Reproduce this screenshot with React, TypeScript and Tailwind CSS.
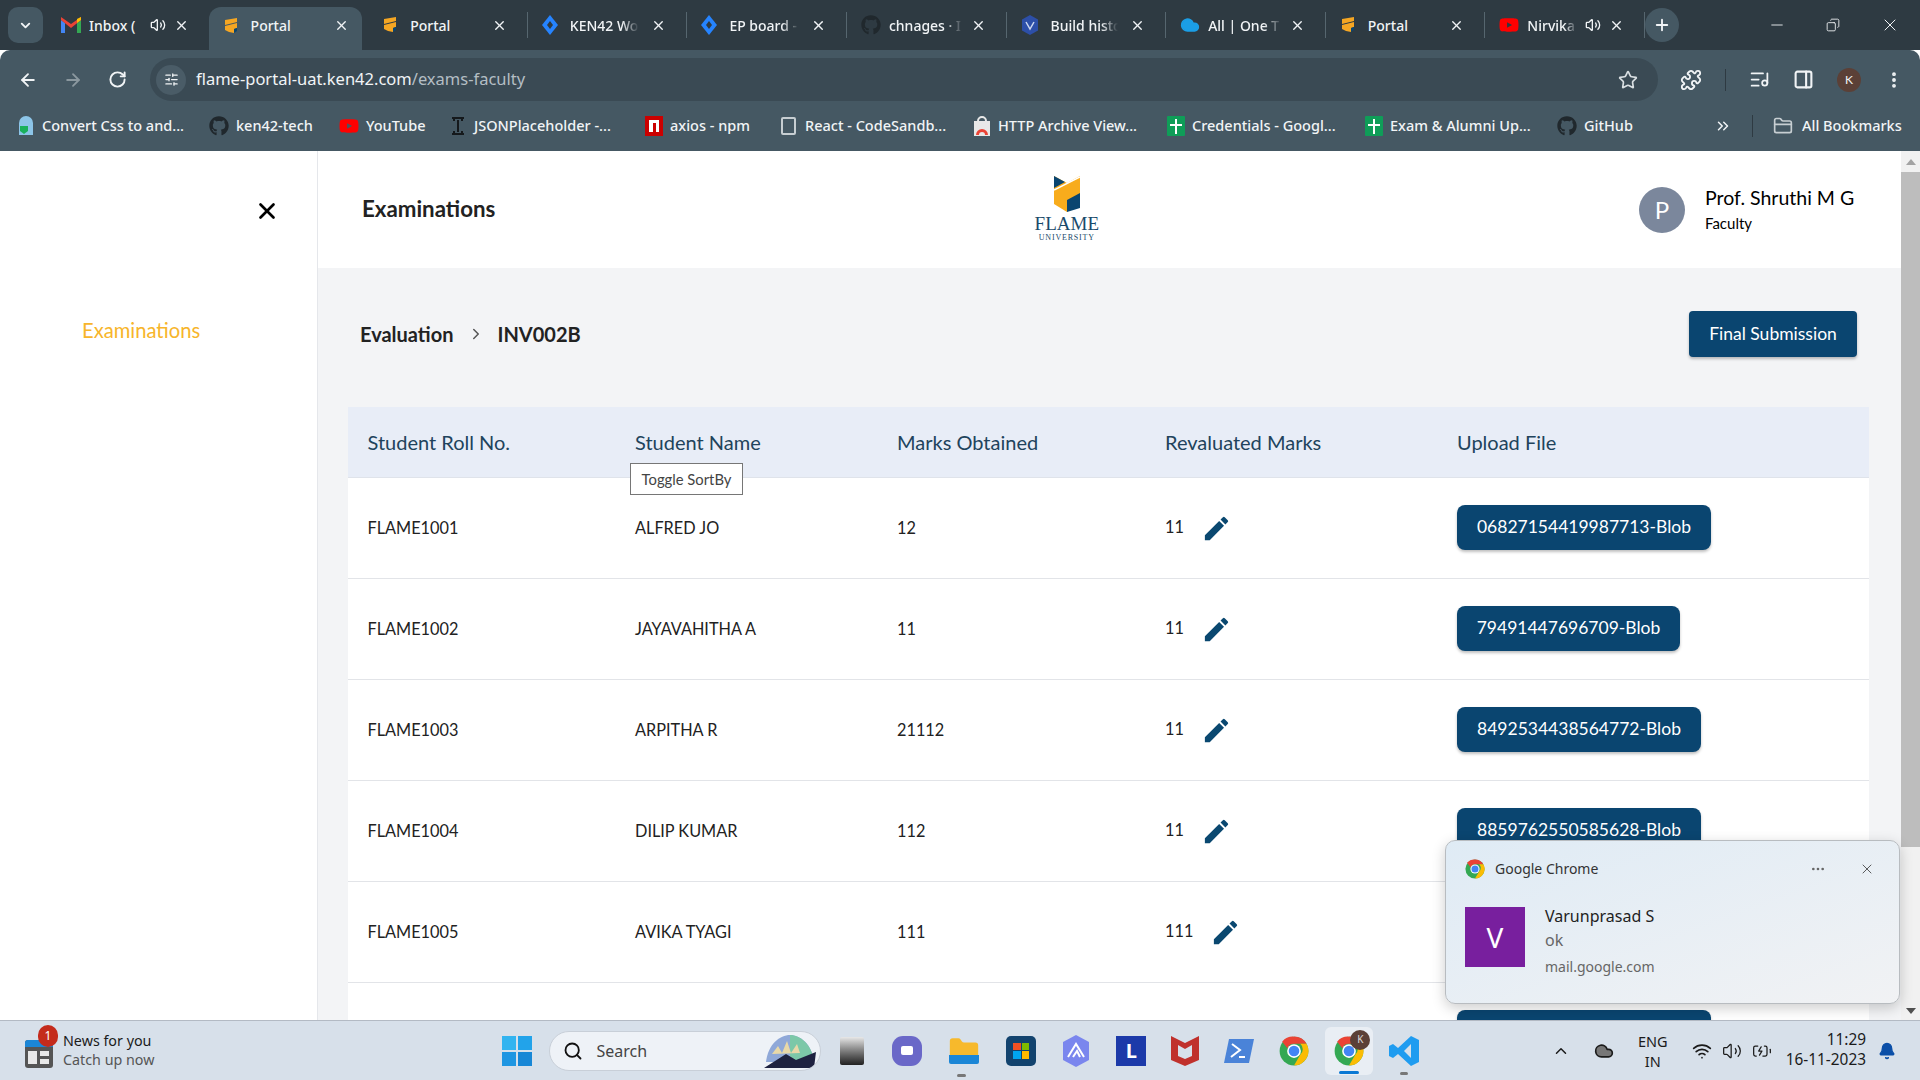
import React from 'react';
import { ArrowLeft, ArrowRight, ChevronDown, ChevronRight, ChevronUp, Copy, Ellipsis, FolderClosed, Minus, PanelRight, Plus, Puzzle, RotateCw, Search, SlidersHorizontal, Star, Volume2, Wifi, X, BatteryCharging, Cloud, Bell, ListMusic, EllipsisVertical, ChevronsRight } from 'lucide-react';
import { FaGithub, FaYoutube } from 'react-icons/fa';

const FlameMark = ({ size = 16 }: { size?: number }) => (
    <svg width={size} height={size} viewBox="0 0 16 16" className="shrink-0">
        <path d="M2 2l12-2v4L2 7z M2 8l12-3v5l-3 1v4l-5-1-4-2z" fill="#f5a623" />
        <path d="M11 11l3-1v3l-3 2z" fill="#0a4570" />
    </svg>
);

const ChromeLogo = ({ size = 30 }: { size?: number }) => (
    <svg width={size} height={size} viewBox="0 0 48 48" className="shrink-0">
        <circle cx="24" cy="24" r="23" fill="#34a853" />
        <path d="M24 1a23 23 0 0 1 20 11.5H24a11.5 11.5 0 0 0-10.5 7L5 9A23 23 0 0 1 24 1z" fill="#ea4335" />
        <path d="M44 12.5A23 23 0 0 1 24 47l10-17a11.5 11.5 0 0 0 0-17.5z" fill="#fbbc04" />
        <circle cx="24" cy="24" r="11" fill="#fff" />
        <circle cx="24" cy="24" r="8.5" fill="#4285f4" />
    </svg>
);

const Jira = () => (
    <svg width="16" height="20" viewBox="0 0 16 20" className="shrink-0">
        <path d="M8 0l8 10-8 10-8-10z" fill="#2684ff" />
        <path d="M8 6l3 4-3 4-3-4z" fill="#2e3a42" />
    </svg>
);

const TABS = [
    { title: 'Inbox (', icon: 'gmail', sound: true },
    { title: 'Portal', icon: 'flame', active: true },
    { title: 'Portal', icon: 'flame', sep: true },
    { title: 'KEN42 Wo', icon: 'jira', sep: true, fade: true },
    { title: 'EP board -', icon: 'jira', sep: true, fade: true },
    { title: 'chnages · I', icon: 'github', sep: true, fade: true },
    { title: 'Build histo', icon: 'build', sep: true, fade: true },
    { title: 'All | One T', icon: 'cloud', sep: true, fade: true },
    { title: 'Portal', icon: 'flame', sep: true },
    { title: 'Nirvika', icon: 'youtube', sound: true, sep: true, fade: true },
];

const TabIcon = ({ name }: { name: string }) => {
    if (name === 'flame') return <FlameMark />;
    if (name === 'jira') return <Jira />;
    if (name === 'github') return <FaGithub className="w-[20px] h-[20px] text-[#20282d] shrink-0" />;
    if (name === 'youtube') return <FaYoutube className="w-[20px] h-[20px] text-[#ff0000] shrink-0" />;
    if (name === 'cloud') return <Cloud className="w-[20px] h-[20px] text-[#1b9ee6] fill-[#1b9ee6] shrink-0" />;
    if (name === 'build') {
        return (
            <svg width="18" height="20" viewBox="0 0 18 20" className="shrink-0">
                <path d="M9 0l8 4.5v11L9 20l-8-4.5v-11z" fill="#2d4fa8" />
                <path d="M5 7l4 7 4-7" stroke="#cdd8f0" strokeWidth="1.5" fill="none" />
            </svg>
        );
    }
    return (
        <svg width="20" height="16" viewBox="0 0 20 16" className="shrink-0">
            <path d="M0 3v13h4V6z" fill="#4285f4" />
            <path d="M20 3v13h-4V6z" fill="#34a853" />
            <path d="M0 0v3l10 8 10-8V0l-10 7z" fill="#ea4335" />
            <path d="M16 2l4-2v3l-4 3z" fill="#fbbc04" />
        </svg>
    );
};

const BookmarkIcon = ({ kind }: { kind: string }) => {
    if (kind === 'github') return <FaGithub className="w-[20px] h-[20px] text-[#20282d] shrink-0" />;
    if (kind === 'youtube') return <FaYoutube className="w-[20px] h-[20px] text-[#ff0000] shrink-0" />;
    if (kind === 'outline') return <span className="w-[15px] h-[18px] mx-[2px] shrink-0 rounded-[2px] border-2 border-[#c7ced2]" />;
    if (kind === 'gopher') {
        return (
            <svg width="18" height="22" viewBox="0 0 18 22" className="shrink-0">
                <path d="M2 8a7 7 0 0 1 14 0v12H2z" fill="#8cc5e8" />
                <path d="M3 11h8v5l-4 3-4-3z" fill="#19b05c" />
            </svg>
        );
    }
    if (kind === 'json') {
        return (
            <svg width="18" height="20" viewBox="0 0 18 20" fill="none" stroke="#15191c" strokeWidth="2" className="shrink-0">
                <path d="M3 2h12M3 18h12M9 4v12M5 2v3M13 2v3M5 15v3M13 15v3" />
            </svg>
        );
    }
    if (kind === 'npm') {
        return (
            <svg width="18" height="20" viewBox="0 0 18 20" className="shrink-0">
                <rect width="18" height="20" fill="#cb0000" />
                <path d="M4 16V4h10v12h-3V7H8v9z" fill="#fff" />
            </svg>
        );
    }
    if (kind === 'archive') {
        return (
            <svg width="18" height="20" viewBox="0 0 18 20" className="shrink-0">
                <path d="M1 5h16v15H1z" fill="#e8e8e8" />
                <path d="M5 5a4 4 0 0 1 8 0" stroke="#e8e8e8" strokeWidth="2" fill="none" />
                <path d="M3 19a6 6 0 0 1 12 0h-3a3 3 0 0 0-6 0z" fill="#ea4335" />
            </svg>
        );
    }
    return (
        <svg width="18" height="20" viewBox="0 0 18 20" className="shrink-0">
            <rect width="18" height="20" rx="1" fill="#0f9d58" />
            <path d="M8 3h2v5h5v2h-5v8H8v-8H3V8h5z" fill="#fff" />
        </svg>
    );
};

const BOOKMARKS = [
    { title: 'Convert Css to and...', kind: 'gopher', w: 'w-[192px]' },
    { title: 'ken42-tech', kind: 'github', w: 'w-[130px]' },
    { title: 'YouTube', kind: 'youtube', w: 'w-[110px]' },
    { title: 'JSONPlaceholder -...', kind: 'json', w: 'w-[196px]' },
    { title: 'axios - npm', kind: 'npm', w: 'w-[134px]' },
    { title: 'React - CodeSandb...', kind: 'outline', w: 'w-[194px]' },
    { title: 'HTTP Archive View...', kind: 'archive', w: 'w-[194px]' },
    { title: 'Credentials - Googl...', kind: 'sheet', w: 'w-[198px]' },
    { title: 'Exam & Alumni Up...', kind: 'sheet', w: 'w-[192px]' },
    { title: 'GitHub', kind: 'github', w: 'w-[100px]' },
];

const ROWS = [
    { roll: 'FLAME1001', name: 'ALFRED JO', marks: '12', re: '11', file: '06827154419987713-Blob', btn: 'w-[254px]' },
    { roll: 'FLAME1002', name: 'JAYAVAHITHA A', marks: '11', re: '11', file: '79491447696709-Blob', btn: 'w-[223px]' },
    { roll: 'FLAME1003', name: 'ARPITHA R', marks: '21112', re: '11', file: '8492534438564772-Blob', btn: 'w-[244px]' },
    { roll: 'FLAME1004', name: 'DILIP KUMAR', marks: '112', re: '11', file: '8859762550585628-Blob', btn: 'w-[244px]' },
    { roll: 'FLAME1005', name: 'AVIKA TYAGI', marks: '111', re: '111', file: '', btn: 'w-[244px]' },
    { roll: '', name: '', marks: '', re: '', file: '', btn: 'w-[254px]' },
];

const TableRow = ({ row }: { row: (typeof ROWS)[number] }) => (
    <div className="grid grid-cols-[267.5px_262px_268px_292px_1fr] items-center h-[101px] pl-[19.5px] pr-[19px] bg-white border-b border-[#e2e4e8] text-[16.3px] text-[#222]">
        <span className="mt-[1px]">{row.roll}</span>
        <span className="mt-[1px]">{row.name}</span>
        <span className="mt-[1px]">{row.marks}</span>
        <div className="flex items-center gap-[17px]">
            {row.re && <span className="-mt-[2px]">{row.re}</span>}
            {row.re && (
                <svg width="31" height="31" viewBox="0 0 24 24" fill="#0a4870">
                    <path d="M3 17.25V21h3.75L17.81 9.94l-3.75-3.75L3 17.25zM20.71 7.04a1 1 0 0 0 0-1.41l-2.34-2.34a1 1 0 0 0-1.41 0l-1.83 1.83 3.75 3.75 1.83-1.83z" />
                </svg>
            )}
        </div>
        <div className={`${row.btn} h-[45px] -mt-[2px] flex items-center justify-center rounded-[8px] bg-[#0a4570] text-white text-[17.5px] shadow-[0_2px_3px_rgba(0,0,0,0.25)]`}>
            {row.file}
        </div>
    </div>
);

const App: React.FC = () => {
    return (
        <div className="relative h-[1080px] w-[1920px] flex flex-col overflow-hidden bg-white font-['Lato',sans-serif]">
            {/* Tab strip */}
            <div className="h-[50px] shrink-0 flex items-center bg-[#2e3a42] pl-[8px] pr-[10px] text-[#f1f4f6] text-[14px] font-['Noto_Sans',sans-serif]">
                <div className="w-[35px] h-[36px] mr-[6px] shrink-0 rounded-[10px] bg-[#455863] flex items-center justify-center">
                    <ChevronDown size={15} strokeWidth={3} />
                </div>
                {TABS.map((tab, i) => (
                    <div
                        key={i}
                        className={`shrink-0 flex items-center ${tab.sound ? 'gap-[8px]' : tab.icon === 'github' || tab.icon === 'cloud' ? 'gap-[8px]' : 'gap-[12px]'} ${i === 0 ? 'pl-[12px]' : 'pl-[14px]'} ${
                            tab.active
                                ? 'self-end w-[153px] mr-[6.6px] pr-[13px] pb-[6px] h-[43px] rounded-t-[12px] bg-[#455863]'
                                : 'w-[159.6px] pr-[20px] h-[26px]'
                        } ${tab.sep ? 'border-r border-[#56666f]' : ''}`}
                    >
                        <TabIcon name={tab.icon} />
                        <span className={`flex-1 overflow-hidden whitespace-nowrap font-medium ${tab.fade ? '[mask-image:linear-gradient(to_right,black_75%,transparent)]' : ''}`}>{tab.title}</span>
                        {tab.sound && <Volume2 size={16} className="shrink-0" />}
                        <X size={15} strokeWidth={2.2} className="shrink-0" />
                    </div>
                ))}
                <div className="w-[34px] h-[34px] shrink-0 rounded-full bg-[#455863] flex items-center justify-center">
                    <Plus size={18} strokeWidth={2.5} />
                </div>
                <div className="ml-auto flex items-center gap-[40px] pr-[10px]">
                    <Minus size={18} strokeWidth={1.2} />
                    <Copy size={14} strokeWidth={1.5} className="-scale-x-100" />
                    <X size={20} strokeWidth={1.2} />
                </div>
            </div>

            {/* Address bar */}
            <div className="h-[51px] shrink-0 flex items-center pt-[8px] bg-[#455863] text-[#f1f4f6] rounded-t-[10px]">
                <div className="w-[150px] shrink-0 flex items-center gap-[25px] pl-[18px]">
                    <ArrowLeft size={20} strokeWidth={2.2} />
                    <ArrowRight size={20} strokeWidth={2.2} className="text-[#8b989f]" />
                    <RotateCw size={19} strokeWidth={2.4} />
                </div>
                <div className="w-[1508px] h-[43px] shrink-0 flex items-center rounded-full bg-[#3a4a54] pl-[6px] pr-[20px] text-[16.5px] font-['Noto_Sans',sans-serif]">
                    <div className="w-[30px] h-[30px] mr-[10px] rounded-full bg-[#4a5c67] flex items-center justify-center">
                        <SlidersHorizontal size={15} />
                    </div>
                    <span>flame-portal-uat.ken42.com</span>
                    <span className="text-[#b4bec4]">/exams-faculty</span>
                    <Star size={20} strokeWidth={2} className="ml-auto text-[#d9dfe2]" />
                </div>
                <div className="flex-1 flex items-center pl-[22px] gap-[23px]">
                    <Puzzle size={22} />
                    <div className="w-px h-[22px] bg-[#2e3a42]" />
                    <ListMusic size={21} />
                    <PanelRight size={21} strokeWidth={2.4} />
                    <div className="w-[24px] h-[24px] rounded-full bg-[#5b4037] flex items-center justify-center text-[12px]">K</div>
                    <EllipsisVertical size={20} strokeWidth={2.6} />
                </div>
            </div>

            {/* Bookmarks bar */}
            <div className="h-[50px] shrink-0 flex items-center bg-[#455863] text-[#f1f4f6] text-[14.5px] font-medium pl-[17px] pb-[1px] font-['Noto_Sans',sans-serif]">
                {BOOKMARKS.map(b => (
                    <div key={b.title} className={`${b.w} shrink-0 flex items-center gap-[7px] whitespace-nowrap`}>
                        <BookmarkIcon kind={b.kind} />
                        <span>{b.title}</span>
                    </div>
                ))}
                <ChevronsRight size={18} className="ml-[57px] shrink-0" />
                <div className="w-px h-[22px] bg-[#2e3a42] mx-[20px] shrink-0" />
                <FolderClosed size={20} className="shrink-0 mr-[9px] text-[#c7ced2]" />
                <span className="whitespace-nowrap">All Bookmarks</span>
            </div>

            {/* Page */}
            <div className="flex-1 min-h-0 flex">
                <aside className="w-[318px] shrink-0 border-r border-[#e5e7eb] bg-white flex flex-col">
                    <div className="h-[117px] flex items-center justify-end pr-[37px] pt-[2px]">
                        <X size={26} strokeWidth={2.5} className="text-black" />
                    </div>
                    <div className="pl-[82px] pt-[47px] text-[#f7b52b] text-[20.2px]">Examinations</div>
                </aside>
                <div className="flex-1 min-w-0 flex flex-col bg-[#f3f4f6]">
                    <header className="h-[117px] shrink-0 bg-white flex items-center pl-[44px] pr-[45px]">
                        <h1 className="flex-1 text-[22.3px] font-bold text-[#222] -mt-[2px]">Examinations</h1>
                        <div className="flex flex-col items-center -mt-[2px] mr-[540px] text-[#1a4a6b] font-['Liberation_Serif',serif]">
                            <svg width="26" height="36" viewBox="0 0 26 36">
                                <path d="M0 0l13 7 13-7v10L0 23z" fill="#f8ac1c" />
                                <path d="M0 0l11 6-11 6z" fill="#0a4570" />
                                <path d="M0 15l26-13v20l-13 14-13-8z" fill="#f8ac1c" />
                                <path d="M13 24l13-7v15l-13 4z" fill="#0a4570" />
                                <path d="M0 14L26 1" stroke="#fff" strokeWidth="1.5" />
                            </svg>
                            <span className="text-[19px] leading-[18px] mt-[3px]">FLAME</span>
                            <span className="text-[8px] leading-[9px] tracking-[0.8px]">UNIVERSITY</span>
                        </div>
                        <div className="w-[46px] h-[46px] rounded-full bg-[#7b879c] text-white flex items-center justify-center text-[24px] mr-[20px] shrink-0">P</div>
                        <div className="text-black w-[151px] shrink-0">
                            <div className="text-[19.5px] leading-[24px] whitespace-nowrap">Prof. Shruthi M G</div>
                            <div className="text-[15px] leading-[20px] mt-[3px]">Faculty</div>
                        </div>
                    </header>
                    <main className="flex-1 min-h-0 overflow-hidden pl-[30px] pr-[32px]">
                        <div className="h-[139px] flex items-center justify-between pl-[12px] pr-[12px] pb-[7px]">
                            <div className="flex items-center text-[20px] font-bold text-[#222]">
                                <span>Evaluation</span>
                                <ChevronRight size={18} className="mx-[13px] text-[#555]" />
                                <span>INV002B</span>
                            </div>
                            <div className="w-[168px] h-[46px] rounded-[4px] bg-[#0a4570] text-white text-[17.5px] flex items-center justify-center shadow-[0_2px_3px_rgba(0,0,0,0.25)]">
                                Final Submission
                            </div>
                        </div>
                        <div className="relative">
                            <div className="grid grid-cols-[267.5px_262px_268px_292px_1fr] items-center h-[71px] pl-[19.5px] pr-[19px] bg-[#e8edf7] border-b border-[#dfe3ea] text-[20px] text-[#21435c]">
                                <span>Student Roll No.</span>
                                <span>Student Name</span>
                                <span>Marks Obtained</span>
                                <span>Revaluated Marks</span>
                                <span>Upload File</span>
                            </div>
                            {ROWS.map((row, i) => <TableRow key={i} row={row} />)}
                            {/* native tooltip */}
                            <div className="absolute left-[282px] top-[56px] w-[113px] h-[32px] flex items-center justify-center bg-white border border-[#767676] text-[14.8px] text-[#444]">
                                Toggle SortBy
                            </div>
                        </div>
                    </main>
                </div>
                <div className="w-[19px] shrink-0 bg-[#f1f1f1] flex flex-col items-center">
                    <div className="h-[21px] flex items-center justify-center">
                        <div className="w-0 h-0 border-x-[5px] border-x-transparent border-b-[6px] border-b-[#a3a3a3]" />
                    </div>
                    <div className="w-full h-[675px] bg-[#bdbdbd]" />
                    <div className="w-0 h-0 mt-auto mb-[6px] border-x-[5px] border-x-transparent border-t-[6px] border-t-[#505050]" />
                </div>
            </div>

            {/* Windows taskbar */}
            <div className="h-[60px] shrink-0 relative flex items-center bg-[#d7e0ea] border-t border-[#b3bac4] text-[#1b1b1b] font-['Noto_Sans',sans-serif]">
                <div className="relative w-[28px] h-[28px] ml-[25px] mr-[10px] rounded-[3px] bg-[#555] mt-[6px]">
                    <div className="absolute left-0 top-0 w-[28px] h-[7px] bg-[#1b86d6] rounded-t-[3px]" />
                    <div className="absolute left-[3px] top-[11px] w-[9px] h-[13px] bg-[#e8e8e8]" />
                    <div className="absolute left-[15px] top-[11px] w-[9px] h-[5px] bg-[#e8e8e8]" />
                    <div className="absolute left-[15px] top-[19px] w-[9px] h-[5px] bg-[#e8e8e8]" />
                    <div className="absolute -top-[15px] left-[13px] w-[20px] h-[22px] rounded-full bg-[#c42b1c] text-white text-[12px] flex items-center justify-center">1</div>
                </div>
                <div className="text-[14.3px] leading-[19px] -mt-[2px]">
                    <div>News for you</div>
                    <div className="text-[#555]">Catch up now</div>
                </div>
                <div className="grid grid-cols-2 gap-[2px] ml-[348px] w-[30px] h-[30px] shrink-0">
                    <span className="bg-[#32b4f0]" /><span className="bg-[#22a3ea]" /><span className="bg-[#1e96e2]" /><span className="bg-[#1787d6]" />
                </div>
                <div className="ml-[17px] w-[272px] h-[40px] shrink-0 rounded-full bg-[#eef2f7] border border-[#c8cfd8] flex items-center pl-[13px] text-[16px] text-[#444] overflow-hidden">
                    <Search size={20} strokeWidth={2.2} className="text-[#111] mr-[13px]" />
                    <span>Search</span>
                    <svg width="60" height="38" viewBox="0 0 60 38" className="ml-auto">
                        <path d="M6 30C8 12 20 3 30 3s22 9 24 27z" fill="#8fa8d8" />
                        <path d="M30 3c10 0 22 9 24 27H30z" fill="#7cc8a8" />
                        <path d="M12 22l6-8 4 7 5-12 4 12 6-9 3 9z" fill="#e8d8a8" />
                        <path d="M4 36l22-14 10 6 20-8-2 16z" fill="#1e2240" />
                    </svg>
                </div>
                <div className="flex-1 flex items-center pl-[19px] gap-[25px]">
                    <div className="w-[24px] h-[28px] bg-gradient-to-b from-[#e8e8e8] to-[#222] rounded-[2px] shrink-0" />
                    <div className="w-[30px] h-[30px] ml-[3px] rounded-[11px] bg-[#6a68c8] flex items-center justify-center shrink-0"><span className="w-[12px] h-[9px] bg-white rounded-[2px]" /></div>
                    <div className="relative shrink-0">
                        <FolderClosed size={34} strokeWidth={0} className="fill-[#f7b92c]" />
                        <div className="absolute left-[2px] right-[2px] bottom-[4px] h-[9px] rounded-b-[2px] bg-[#1b86d6]" />
                        <div className="absolute left-[10px] -bottom-[9px] w-[9px] h-[3px] rounded-full bg-[#777]" />
                    </div>
                    <div className="w-[30px] h-[30px] rounded-[5px] bg-[#12436e] grid grid-cols-2 gap-[1px] p-[7px] shrink-0">
                        <span className="bg-[#f25022]" /><span className="bg-[#7fba00]" /><span className="bg-[#00a4ef]" /><span className="bg-[#ffb900]" />
                    </div>
                    <svg width="30" height="32" viewBox="0 0 30 32" className="shrink-0">
                        <path d="M15 0l13 7v18l-13 7-13-7V7z" fill="#7a86ee" />
                        <path d="M7 22L15 9l8 13M12 22l4-6 3 6" stroke="#fff" strokeWidth="2" fill="none" />
                    </svg>
                    <div className="w-[30px] h-[30px] bg-[#1c3aa9] text-white font-bold text-[20px] flex items-center justify-center shrink-0">L</div>
                    <svg width="28" height="30" viewBox="0 0 28 30" className="shrink-0"><path d="M0 0l14 7 14-7v24l-14 6-14-6z M7 9v11l7 3 7-3V9l-7 4z" fill="#c0312c" fillRule="evenodd" /></svg>
                    <svg width="30" height="24" viewBox="0 0 30 24" className="shrink-0"><path d="M5 0h25l-5 24H0z" fill="#4a83d8" /><path d="M8 5l8 6-9 7M15 18h6" stroke="#fff" strokeWidth="2" fill="none" /></svg>
                    <ChromeLogo />
                    <div className="relative w-[48px] h-[48px] -mx-[9px] rounded-[6px] bg-[#e9eef4] flex items-center justify-center shrink-0">
                        <ChromeLogo />
                        <div className="absolute right-[3px] top-[3px] w-[20px] h-[20px] rounded-full bg-[#5b4037] text-[#ddd] text-[10px] flex items-center justify-center">K</div>
                        <div className="absolute bottom-[1px] left-[14px] w-[20px] h-[3px] rounded-full bg-[#0a78d4]" />
                    </div>
                    <div className="relative shrink-0">
                        <svg width="30" height="30" viewBox="0 0 30 30"><path d="M22 0l8 4v22l-8 4L9 18l-5 4-4-2v-10l4-2 5 4z" fill="#1f9cf0" /><path d="M22 8l-7 7 7 7z" fill="#d7e0ea" /></svg>
                        <div className="absolute left-[11px] -bottom-[9px] w-[8px] h-[3px] rounded-full bg-[#777]" />
                    </div>
                </div>
                <div className="flex items-center pr-[24px] text-[#1b1b1b]">
                    <ChevronUp size={18} className="mr-[24px]" />
                    <Cloud size={20} className="mr-[24px] fill-[#777]" />
                    <div className="text-[14.5px] leading-[20px] text-center mr-[24px]">ENG<br />IN</div>
                    <Wifi size={20} className="mr-[10px]" />
                    <Volume2 size={20} strokeWidth={1.5} className="mr-[10px]" />
                    <BatteryCharging size={20} strokeWidth={1.5} className="mr-[14px]" />
                    <div className="text-[15.4px] leading-[20px] text-right mr-[12px] -mt-[1px]">11:29<br />16-11-2023</div>
                    <Bell size={18} className="fill-[#0b4fa8] text-[#0b4fa8]" />
                </div>
            </div>

            {/* Chrome notification */}
            <div className="absolute left-[1445px] top-[840px] w-[455px] h-[164px] rounded-[10px] border border-[#b8bcc0] bg-gradient-to-br from-[#dfebf5] to-[#f1f2f4] shadow-[0_4px_14px_rgba(0,0,0,0.2)] pl-[19px] pr-[18px] pt-[17px] font-['Noto_Sans',sans-serif]">
                <div className="flex items-center text-[14px] text-[#333]">
                    <ChromeLogo size={20} />
                    <span className="ml-[10px]">Google Chrome</span>
                    <Ellipsis size={16} className="ml-auto mr-[33px] text-[#666]" />
                    <X size={16} strokeWidth={1.2} className="mr-[6px]" />
                </div>
                <div className="flex mt-[28px]">
                    <div className="w-[60px] h-[60px] bg-[#781f9e] text-white text-[28px] flex items-center justify-center">V</div>
                    <div className="ml-[20px] -mt-[3px]">
                        <div className="text-[16px] leading-[24px] text-[#222]">Varunprasad S</div>
                        <div className="text-[16px] leading-[24px] text-[#666]">ok</div>
                        <div className="text-[14px] leading-[24px] mt-[3px] text-[#666]">mail.google.com</div>
                    </div>
                </div>
            </div>
        </div>
    );
};

export default App;
